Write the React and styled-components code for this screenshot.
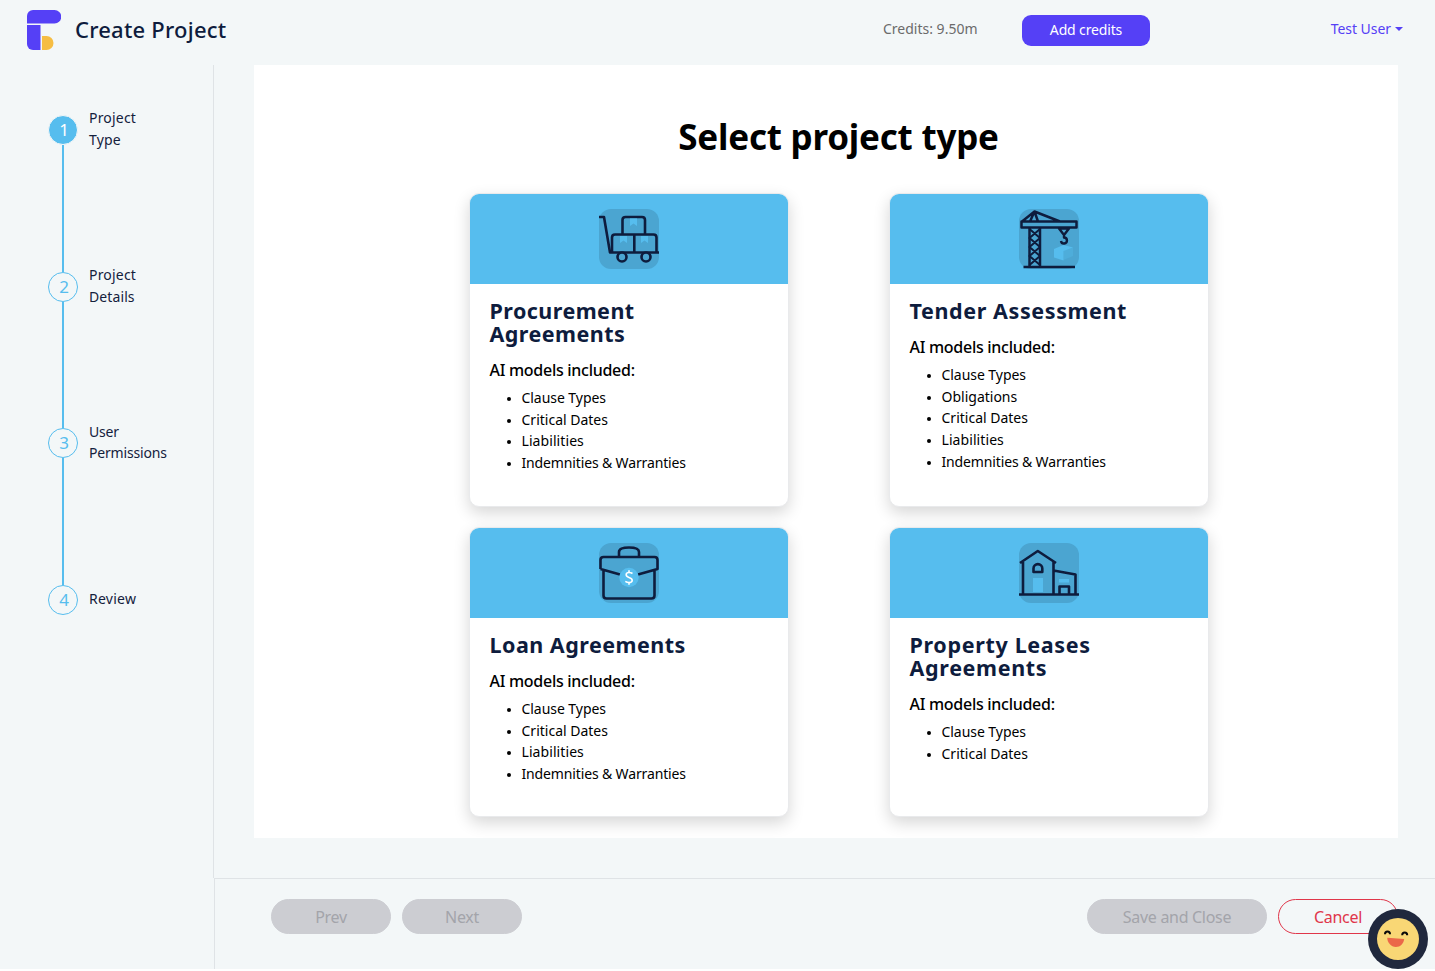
import React from 'react';
import styled, { createGlobalStyle } from 'styled-components';

const navy = '#0e1c3d';
const sky = '#56bdee';
const violet = '#5540f6';
const line = '#dfe3e6';

const GlobalStyle = createGlobalStyle`
  *, *::before, *::after { box-sizing: border-box; }
  body {
    margin: 0;
    background: #fff;
    color: #000;
    font: 14.4px/1.5 "Noto Sans", "Open Sans", sans-serif;
    overflow: hidden;
  }
  h1, h2, h3, ul { margin: 0; }
  button { font: inherit; }
`;

const Page = styled.div`
  position: relative;
  width: 1435px;
  height: 969px;
  display: grid;
  grid-template: 65px 813px 91px / 214px 1fr;
  background: #f3f7f8;
`;

const Header = styled.header`
  grid-column: 1 / -1;
  display: flex;
  align-items: flex-start;
  padding: 10px 32px 0 27px;
`;

const PageTitle = styled.h1`
  width: 808px;
  margin-left: 14px;
  padding-top: 2px;
  color: ${navy};
  font-size: 22px;
  font-weight: 500;
  line-height: 34px;
  letter-spacing: 0.22px;
`;

const Credits = styled.span`
  width: 139px;
  padding-top: 8px;
  color: #6b6b6b;
  font-size: 14px;
  letter-spacing: 0;
`;

const AddCredits = styled.button`
  width: 128px;
  height: 31px;
  margin-top: 5px;
  padding: 0 0 2px;
  border: 0;
  border-radius: 9px;
  background: ${violet};
  color: #fff;
  font-size: 14px;
  letter-spacing: -0.15px;
`;

const UserMenu = styled.div`
  display: flex;
  align-items: center;
  gap: 4px;
  margin: 8px 0 0 auto;
  color: ${violet};
  font-size: 14px;
  letter-spacing: -0.05px;
`;

const Caret = styled.span`
  border: 4px solid transparent;
  border-top-color: currentColor;
  border-bottom: 0;
`;

const Sidebar = styled.aside`
  padding: 50px 0 0 48px;
  border-right: 1px solid ${line};
`;

const Step = styled.div`
  display: flex;
  gap: 11px;
  height: ${p => (p.$last ? 30 : 156.7)}px;
`;

const StepTrack = styled.div`
  display: flex;
  flex-direction: column;
  align-items: center;
  &::after {
    content: '';
    flex: 1;
    width: 2px;
    background: ${sky};
    display: ${p => (p.$last ? 'none' : 'block')};
  }
`;

const StepNumber = styled.span`
  width: 30px;
  height: 30px;
  flex: none;
  padding-left: 2px;
  border: 1px solid ${p => (p.$active ? '#f3f7f8' : sky)};
  border-radius: 50%;
  background: ${p => (p.$active ? sky : '#f3f7f8')};
  color: ${p => (p.$active ? '#fff' : sky)};
  font-size: 17px;
  line-height: 28px;
  text-align: center;
`;

const StepLabel = styled.span`
  display: flex;
  flex-direction: column;
  justify-content: center;
  width: 84px;
  height: 28px;
  color: #14213d;
  font-size: 14px;
  line-height: 21.6px;
`;

const StepWord = styled.span`
  letter-spacing: ${p => p.$tracking}px;
`;

const Main = styled.main`
  padding: 0 37px 40px 40px;
`;

const Panel = styled.section`
  height: 773px;
  padding: 50px 0 0 25px;
  background: #fff;
  display: flex;
  flex-direction: column;
  align-items: center;
`;

const PanelTitle = styled.h2`
  height: 78px;
  font-size: 35px;
  font-weight: 700;
  line-height: 44px;
  letter-spacing: -0.22px;
  white-space: nowrap;
`;

const Cards = styled.div`
  display: grid;
  grid-template: 314px 290px / 320px 320px;
  gap: 20px 100px;
`;

const Card = styled.article`
  border: 1px solid #e9eaec;
  border-radius: 10px;
  overflow: hidden;
  background: #fff;
  box-shadow: 0 6px 16px rgba(0, 0, 0, 0.16);
`;

const CardBanner = styled.div`
  height: 90px;
  display: grid;
  place-items: center;
  background: ${sky};
`;

const CardBody = styled.div`
  padding: 15px 20px;
`;

const CardTitle = styled.h3`
  width: 230px;
  color: ${navy};
  font-size: 21.5px;
  font-weight: 700;
  line-height: 23px;
  letter-spacing: ${p => p.$tracking}px;
`;

const ModelsLabel = styled.div`
  margin-top: 13px;
  font-size: 16px;
  font-weight: 500;
  line-height: 24px;
  letter-spacing: -0.28px;
`;

const Models = styled.ul`
  margin-top: 5px;
  padding-left: 17px;
  font-size: 14px;
  line-height: 21.7px;
  list-style: none;
`;

const Model = styled.li`
  display: flex;
  align-items: center;
  gap: 11px;
  letter-spacing: ${p => p.$tracking}px;
  &::before {
    content: '';
    width: 4px;
    height: 4px;
    margin-top: 2px;
    border-radius: 50%;
    background: #000;
  }
`;

const Footer = styled.footer`
  grid-column: 2;
  display: flex;
  align-items: flex-start;
  gap: 11px;
  padding: 20px 37px 0 56px;
  border-top: 1px solid ${line};
  border-left: 1px solid ${line};
`;

const FooterButton = styled.button`
  width: ${p => (p.$wide ? 180 : 120)}px;
  height: 35px;
  margin-left: ${p => (p.$wide ? 'auto' : 0)};
  padding: 0;
  border: 1px solid ${p => (p.$danger ? '#e0364a' : '#cccdd2')};
  border-radius: 18px;
  background: ${p => (p.$danger ? 'transparent' : '#cccdd2')};
  color: ${p => (p.$danger ? '#e0364a' : '#a3a4aa')};
  font-size: 16px;
  letter-spacing: -0.3px;
`;

const ChatBubble = styled.div`
  position: absolute;
  left: 1368px;
  top: 909px;
  width: 60px;
  height: 60px;
  svg { display: block; }
`;

const Logo = () => (
  <svg width="34" height="40" viewBox="0 0 34 40">
    <path d="M6 0H27.5A6.75 6.75 0 0 1 27.5 13.5H0V6A6 6 0 0 1 6 0Z" fill="#5540f6" />
    <path d="M0 15H13.5V40H6A6 6 0 0 1 0 34Z" fill="#5540f6" />
    <path d="M15 26H19.5A7 7 0 0 1 19.5 40H15Z" fill="#f6bd43" />
  </svg>
);

const Glyph = ({ children }) => (
  <svg width="60" height="60" viewBox="0 0 60 60" fill="none" stroke={navy} strokeWidth="2.6" strokeLinejoin="round">
    <rect width="60" height="60" rx="12" fill="#4ba5d1" stroke="none" />
    {children}
  </svg>
);

const TrolleyIcon = () => (
  <Glyph>
    <path d="M0 8H5L11 43.5H60" />
    <path d="M23.5 25V11Q23.5 8 26.5 8H43Q46 8 46 11V25" />
    <path d="M13 43V28.5Q13 25.5 16 25.5H54.5Q57.5 25.5 57.5 28.5V43M35.3 25.5V43" />
    <path d="M31 9.5H38V17L34.5 14.5L31 17ZM21 27H28V34L24.5 31.5L21 34ZM42 27H49V34L45.5 31.5L42 34Z" fill={sky} stroke="none" />
    <circle cx="23" cy="48" r="4.5" fill="#4ba5d1" />
    <circle cx="47" cy="48" r="4.5" fill="#4ba5d1" />
  </Glyph>
);

const CraneIcon = () => (
  <Glyph>
    <path d="M44.5 41.5 54 38.5V47L44.5 51Z" fill="#4eadda" stroke="none" />
    <path d="M35 40 44.5 36 54 38.5 44.5 42V51.5L35 48.5Z" fill={sky} stroke="none" />
    <path d="M2.5 12.5H57.5V18.5H2.5ZM3 12.5 15.5 2.5 41 12.5M15.5 2.5 11 12.5M15.5 2.5 19 12.5M10.5 19V57M21 19V57M4.5 58H56" strokeWidth="2.5" />
    <path d="M10.5 20 21 29 10.5 38 21 47 10.5 56M21 20 10.5 29 21 38 10.5 47 21 56" strokeWidth="2" />
    <path d="M40 19.5H50L45 26ZM45 26V28.5A3 3 0 1 1 42 32" strokeWidth="2.4" />
  </Glyph>
);

const BriefcaseIcon = () => (
  <Glyph>
    <path d="M20 14V9Q20 4.5 30 4.5Q40 4.5 40 9V14" />
    <path d="M1.5 26V17Q1.5 14 4.5 14H55.5Q58.5 14 58.5 17V26L39 31.5M1.5 26 21 31.5M4.5 27V52.5Q4.5 55.5 7.5 55.5H52.5Q55.5 55.5 55.5 52.5V27" />
    <circle cx="30" cy="34.5" r="9.7" fill={sky} stroke="none" />
    <path d="M33.5 30.5Q32 29.5 30 29.5C26.5 29.5 26 33.2 30 34.4C34.5 35.7 34 39.5 30 39.5Q28 39.5 26.3 38.4M30 27.2V29.5M30 39.5V41.8" stroke="#fff" strokeWidth="1.6" />
  </Glyph>
);

const HouseIcon = () => (
  <Glyph>
    <path d="M14 35H24V49H14ZM40 36H50V39.5H40Z" fill={sky} stroke="none" />
    <path d="M1 20 18.8 8 37 20M4 19V51M34.5 19V51M34.5 27.5 56.5 31.5V51M0 51.5H60M14.5 29V25.5A4.4 4.4 0 0 1 23.3 25.5V29ZM40.5 51V43.5H50V51" />
  </Glyph>
);

const Smiley = () => (
  <svg width="60" height="60" viewBox="0 0 60 60">
    <circle cx="30" cy="30" r="30" fill="#20283d" />
    <circle cx="30" cy="30" r="21" fill="#f9d775" />
    <path d="M17 25.2A2.5 2.6 0 0 1 22 25.2M34.2 26.2A2.5 2.6 0 0 1 39.2 26.2" fill="none" stroke="#090909" strokeWidth="2" />
    <path d="M19.3 28.8 36.2 30C35.5 34.5 32.5 38 27.8 38C23 38 19.2 33.5 19.3 28.8Z" fill="#eb6849" />
  </svg>
);

const wordTracking = { Project: 0.2, Type: 0.15, Details: 0.1, User: -0.2, Permissions: -0.18, Review: 0.25 };

const modelTracking = {
  'Clause Types': -0.05,
  'Critical Dates': 0,
  Obligations: 0,
  Liabilities: 0.08,
  'Indemnities & Warranties': -0.14,
};

const steps = [
  { label: ['Project', 'Type'], active: true },
  { label: ['Project', 'Details'] },
  { label: ['User', 'Permissions'] },
  { label: ['Review'] },
];

const types = [
  { title: 'Procurement Agreements', Icon: TrolleyIcon, tracking: 0.45, models: ['Clause Types', 'Critical Dates', 'Liabilities', 'Indemnities & Warranties'] },
  { title: 'Tender Assessment', Icon: CraneIcon, tracking: 0.6, models: ['Clause Types', 'Obligations', 'Critical Dates', 'Liabilities', 'Indemnities & Warranties'] },
  { title: 'Loan Agreements', Icon: BriefcaseIcon, tracking: 0.48, models: ['Clause Types', 'Critical Dates', 'Liabilities', 'Indemnities & Warranties'] },
  { title: 'Property Leases Agreements', Icon: HouseIcon, tracking: 0.66, models: ['Clause Types', 'Critical Dates'] },
];

export default function App() {
  return (
    <Page>
      <GlobalStyle />
      <Header>
        <Logo />
        <PageTitle>Create Project</PageTitle>
        <Credits>Credits: 9.50m</Credits>
        <AddCredits>Add credits</AddCredits>
        <UserMenu>Test User<Caret /></UserMenu>
      </Header>
      <Sidebar>
        {steps.map(({ label, active }, i) => {
          const last = i === steps.length - 1;
          return (
            <Step key={i} $last={last}>
              <StepTrack $last={last}><StepNumber $active={active}>{i + 1}</StepNumber></StepTrack>
              <StepLabel>
                {label.map(word => <StepWord key={word} $tracking={wordTracking[word]}>{word}</StepWord>)}
              </StepLabel>
            </Step>
          );
        })}
      </Sidebar>
      <Main>
        <Panel>
          <PanelTitle>Select project type</PanelTitle>
          <Cards>
            {types.map(({ title, Icon, tracking, models }) => (
              <Card key={title}>
                <CardBanner><Icon /></CardBanner>
                <CardBody>
                  <CardTitle $tracking={tracking}>{title}</CardTitle>
                  <ModelsLabel>AI models included:</ModelsLabel>
                  <Models>{models.map(m => <Model key={m} $tracking={modelTracking[m]}>{m}</Model>)}</Models>
                </CardBody>
              </Card>
            ))}
          </Cards>
        </Panel>
      </Main>
      <Footer>
        <FooterButton disabled>Prev</FooterButton>
        <FooterButton disabled>Next</FooterButton>
        <FooterButton disabled $wide>Save and Close</FooterButton>
        <FooterButton $danger>Cancel</FooterButton>
      </Footer>
      <ChatBubble><Smiley /></ChatBubble>
    </Page>
  );
}
